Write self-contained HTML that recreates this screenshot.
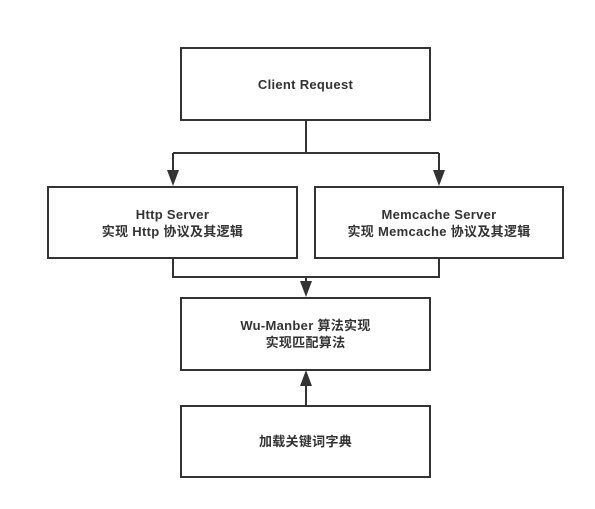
<!DOCTYPE html>
<html><head><meta charset="utf-8"><style>
body{margin:0;width:595px;height:509px;background:#fff;position:relative;font-family:"Liberation Sans","Noto Sans CJK SC",sans-serif;}
.b{position:absolute;box-sizing:border-box;border:2px solid #333;display:flex;align-items:center;justify-content:center;text-align:center;font-weight:bold;font-size:13px;line-height:17px;color:#333;letter-spacing:0.3px}
svg{position:absolute;left:0;top:0}
</style></head><body>
<svg width="595" height="509">
<g stroke="#333" stroke-width="2" fill="none">
<path d="M306 120V153M173 153H439M173 153V172M439 153V172"/>
<path d="M173 258V277H439V258M306 277V283"/>
<path d="M306 405V386"/>
</g>
<g fill="#333">
<path d="M167 170H179L173 186Z"/><path d="M433 170H445L439 186Z"/>
<path d="M300 281H312L306 297Z"/><path d="M300 386H312L306 370Z"/>
</g>
</svg>
<div class="b" style="left:180px;top:47px;width:251px;height:74px">Client Request</div>
<div class="b" style="left:47px;top:186px;width:251px;height:73px">Http Server<br>实现 Http 协议及其逻辑</div>
<div class="b" style="left:314px;top:186px;width:250px;height:73px">Memcache Server<br>实现 Memcache 协议及其逻辑</div>
<div class="b" style="left:180px;top:297px;width:251px;height:74px">Wu-Manber 算法实现<br>实现匹配算法</div>
<div class="b" style="left:180px;top:405px;width:251px;height:73px">加载关键词字典</div>
</body></html>
